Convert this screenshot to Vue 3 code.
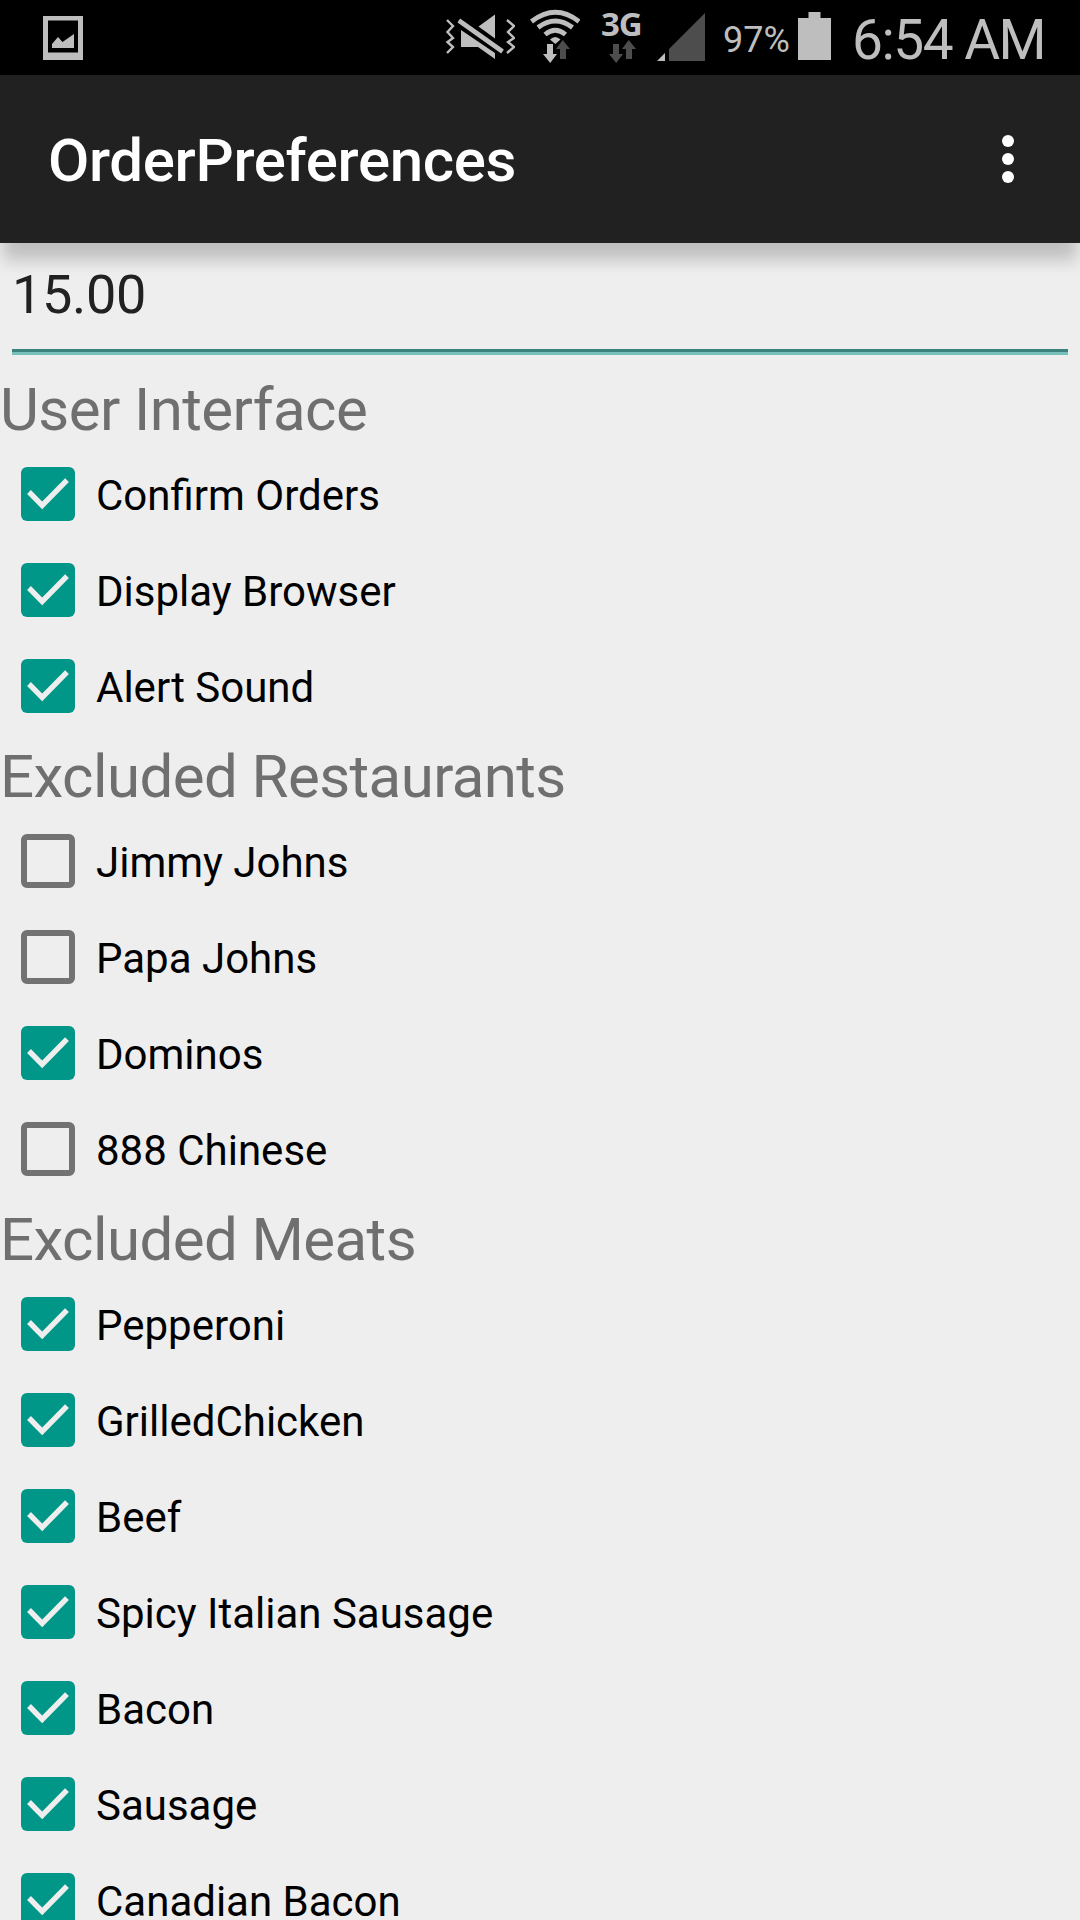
<script setup>
import { reactive, ref } from 'vue'

const amount = ref('15.00')

const sections = reactive([
  {
    title: 'User Interface',
    items: [
      { label: 'Confirm Orders', checked: true },
      { label: 'Display Browser', checked: true },
      { label: 'Alert Sound', checked: true },
    ],
  },
  {
    title: 'Excluded Restaurants',
    items: [
      { label: 'Jimmy Johns', checked: false },
      { label: 'Papa Johns', checked: false },
      { label: 'Dominos', checked: true },
      { label: '888 Chinese', checked: false },
    ],
  },
  {
    title: 'Excluded Meats',
    items: [
      { label: 'Pepperoni', checked: true },
      { label: 'GrilledChicken', checked: true },
      { label: 'Beef', checked: true },
      { label: 'Spicy Italian Sausage', checked: true },
      { label: 'Bacon', checked: true },
      { label: 'Sausage', checked: true },
      { label: 'Canadian Bacon', checked: true },
    ],
  },
])
</script>

<template>
  <div class="screen">
    <header class="status">
      <svg class="picture" width="40" height="44" viewBox="0 0 40 44">
        <path fill="#bebebe" fill-rule="evenodd" d="M0 0H40V44H0ZM5 4.5V36.500H35V4.500Z" />
        <path fill="#bebebe" d="M9 32V28L15 21L19.500 26L31 18V32Z" />
      </svg>
      <svg class="mute" width="70" height="75" viewBox="445 0 70 75">
        <g fill="none" stroke="#bebebe" stroke-width="2.400">
          <path d="M447 20L453 26L447.500 32L453 38L447.500 42L453 47L447 53" />
          <path d="M507 20L514 26L508 32L514 38L508 42L514 47L507 53" />
        </g>
        <path fill="#bebebe" d="M478.500 26.500L495 14.500V38.500ZM461 30L495 53V59L478 47H461Z" />
        <path d="M458.500 20.500L502.500 51.500" stroke="#000" stroke-width="10" />
        <path d="M458.800 20.500L502.500 51.500" stroke="#bebebe" stroke-width="4.600" />
      </svg>
      <svg class="wifi" width="50" height="75" viewBox="530 0 50 75">
        <g fill="none" stroke="#bebebe" stroke-width="4.800">
          <path d="M531.500 21.500Q555.300 3 579 21.500" />
          <path d="M538 27.500Q555.300 14.500 572.500 27.500" />
          <path d="M545 34.500Q555.300 26 565.500 34.500" />
        </g>
        <path fill="#bebebe" d="M550 39.500Q555.300 34.500 560.500 39.500L555.300 44Z" />
        <path fill="#bebebe" d="M547 44H553V54H557L550.200 63L543 54H547Z" />
        <path fill="#4d4d4d" d="M560 59H566V49H570L562.700 40L556 49H560Z" />
      </svg>
      <div class="network">
        <span class="generation">3G</span>
        <svg width="27" height="24" viewBox="0 0 27 24" fill="#4d4d4d">
          <path d="M4 4H10V14H14L7.200 23L0 14H4Z" />
          <path d="M17 19H23V9H27L19.700 0L13 9H17Z" />
        </svg>
      </div>
      <svg class="signal" width="48" height="48" viewBox="657 13 48 48">
        <path fill="#bebebe" d="M657 61L665 53V61Z" />
        <path fill="#4d4d4d" d="M669 61V49L705 13V61Z" />
      </svg>
      <span class="percent">97%</span>
      <svg class="battery" width="33" height="48" viewBox="0 0 33 48">
        <path fill="#bebebe" d="M0 6H10.500V0H22.500V6H33V48H0Z" />
      </svg>
      <time class="clock">6:54 AM</time>
    </header>

    <div class="toolbar">
      <h1>OrderPreferences</h1>
      <button class="overflow" aria-label="More options"><i /><i /><i /></button>
    </div>

    <main>
      <div class="field"><input v-model="amount" inputmode="decimal" aria-label="Amount" /></div>
      <section v-for="section in sections" :key="section.title">
        <h2>{{ section.title }}</h2>
        <label v-for="item in section.items" :key="item.label" class="row">
          <input v-model="item.checked" class="native" type="checkbox" />
          <span class="box" :class="{ checked: item.checked }">
            <svg v-if="item.checked" width="54" height="54" viewBox="0 0 54 54">
              <path d="M8 25L21.200 38.300L46 13.200" fill="none" stroke="#eee" stroke-width="5.400" />
            </svg>
          </span>
          <span class="label">{{ item.label }}</span>
        </label>
      </section>
    </main>
  </div>
</template>

<style>
body {
  margin: 0;
  background: #eee;
}
</style>

<style scoped>
.screen {
  display: flex;
  flex-direction: column;
  width: 1080px;
  height: 1920px;
  overflow: hidden;
  background: #eee;
  font-family: Roboto, sans-serif;
}
svg {
  display: block;
  flex: none;
}
.status {
  display: flex;
  flex: none;
  height: 75px;
  background: #000;
  color: #bebebe;
  white-space: nowrap;
}
.picture {
  margin: 16px 0 0 43px;
}
.mute {
  margin-left: 362px;
}
.wifi {
  margin-left: 15px;
}
.network {
  display: flex;
  flex-direction: column;
  width: 47px;
  margin: 6px 0 0 21px;
}
.network svg {
  margin: 0 0 0 8px;
}
.generation {
  height: 34px;
  font: 700 33px/36px "Open Sans", sans-serif;
  letter-spacing: -1px;
}
.signal {
  margin: 13px 0 0 9px;
}
.percent {
  width: 75px;
  margin-left: 18px;
  font-size: 36px;
  line-height: 80px;
}
.battery {
  margin-top: 12px;
}
.clock {
  margin-left: 21px;
  font-size: 55px;
  letter-spacing: -1.5px;
  line-height: 81px;
}
.toolbar {
  display: flex;
  flex: none;
  align-items: center;
  justify-content: space-between;
  height: 168px;
  padding: 0 66px 0 48px;
  box-sizing: border-box;
  background: #212121;
  box-shadow: 0 20px 16px -3px rgba(0, 0, 0, 0.2);
  z-index: 1;
}
h1 {
  margin: 4px 0 0;
  color: #fff;
  font-size: 60px;
  font-weight: 500;
  letter-spacing: -0.33px;
  line-height: 72px;
}
.overflow {
  display: flex;
  flex-direction: column;
  gap: 6px;
  margin: 0;
  padding: 0;
  border: 0;
  background: none;
}
.overflow i {
  width: 12px;
  height: 12px;
  border-radius: 50%;
  background: #fff;
}
.field {
  height: 124px;
  padding: 0 12px;
}
.field input {
  display: block;
  width: 100%;
  height: 112px;
  padding: 0 0 6px;
  box-sizing: border-box;
  border: 0;
  border-bottom: 3px solid #76c2bb;
  box-shadow: inset 0 -3px #3b827c;
  outline: 0;
  background: none;
  color: #212121;
  font: 54px Roboto, sans-serif;
  letter-spacing: -0.3px;
}
h2 {
  height: 73px;
  margin: 0;
  padding-top: 6px;
  color: #6f6f6f;
  font-size: 60px;
  font-weight: 400;
  letter-spacing: -0.58px;
  line-height: 73px;
}
.row {
  display: flex;
  height: 96px;
  color: #000;
}
.native {
  position: absolute;
  opacity: 0;
}
.box {
  width: 54px;
  height: 54px;
  margin: 21px 21px 0;
  box-sizing: border-box;
  border: 6px solid #727272;
  border-radius: 6px;
}
.box.checked {
  border: 0;
  background: #009688;
}
.label {
  padding-top: 3px;
  font-size: 42px;
  line-height: 93px;
}
</style>
